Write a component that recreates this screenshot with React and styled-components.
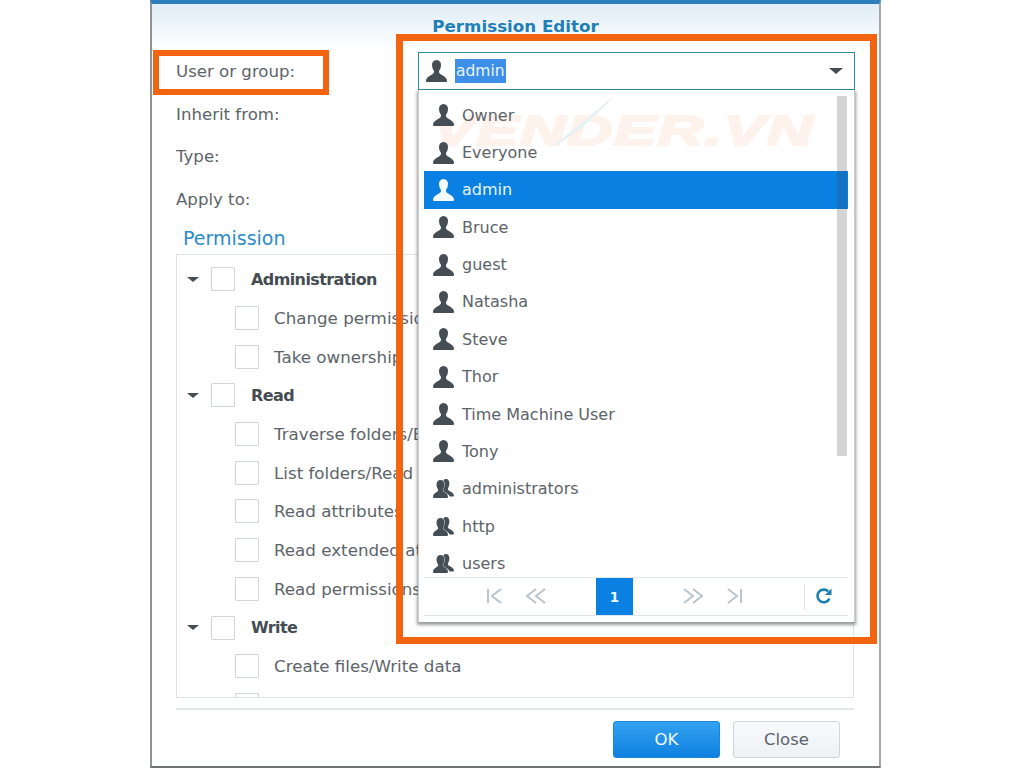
import React from "react";
import styled, { createGlobalStyle } from "styled-components";

const GlobalStyle = createGlobalStyle`
  html, body {
    margin: 0;
    padding: 0;
    background: #fff;
    font-family: "DejaVu Sans", sans-serif;
  }
  * {
    box-sizing: border-box;
  }
`;

const Page = styled.div`
  width: 1024px;
  height: 768px;
  overflow: hidden;
  padding-left: 150px;
`;

const Dialog = styled.div`
  position: relative;
  width: 731px;
  height: 768px;
  border-left: 2px solid #8f9396;
  border-right: 2px solid #a4a8ab;
  border-bottom: 2px solid #6f7376;
  border-top: 4px solid #2b7fbc;
  background: linear-gradient(#dfecf6 0, #fff 46px);
  display: flex;
  flex-direction: column;
  padding: 0 25px 0 24px;
`;

const Title = styled.div`
  height: 44px;
  line-height: 44px;
  padding-left: 1px;
  text-align: center;
  font-size: 16.7px;
  font-weight: bold;
  color: #1f7fb8;
`;

const FormRows = styled.div`
  padding-top: 3px;
`;

const FormRow = styled.div`
  height: 42.7px;
  line-height: 42px;
  font-size: 16.6px;
  color: #5c646a;
`;

const SectionTitle = styled.div`
  height: 26px;
  line-height: 26px;
  margin-top: 3px;
  padding-left: 7px;
  font-size: 19px;
  color: #2a8cc4;
`;

const TreeBox = styled.div`
  height: 444px;
  margin-top: 3px;
  padding-top: 5px;
  border: 1px solid #dfe4e8;
  overflow: hidden;
`;

const TreeRow = styled.div`
  height: 38.72px;
  display: flex;
  align-items: center;
  gap: ${(p) => (p.$parent ? "16px" : "15px")};
  padding-left: ${(p) => (p.$parent ? "10px" : "58px")};
  font-size: ${(p) => (p.$parent ? "16px" : "16.7px")};
  letter-spacing: ${(p) => (p.$parent ? "-0.6px" : "0")};
  font-weight: ${(p) => (p.$parent ? "bold" : "normal")};
  color: ${(p) => (p.$parent ? "#454c52" : "#5c646a")};
  white-space: nowrap;
`;

const Caret = styled.span`
  width: 0;
  height: 0;
  flex: none;
  border-left: ${(p) => p.$size}px solid transparent;
  border-right: ${(p) => p.$size}px solid transparent;
  border-top: ${(p) => p.$size - 1}px solid #454c52;
`;

const TreeCaret = styled(Caret)`
  margin-right: -4px;
`;

const Checkbox = styled.span`
  width: 24px;
  height: 24px;
  flex: none;
  border: 1px solid #cfd5da;
  border-radius: 1px;
  background: #fff;
`;

const Footer = styled.div`
  margin-top: 10px;
  border-top: 2px solid #e3e7ea;
  padding: 11px 14px 0 0;
  display: flex;
  justify-content: flex-end;
  gap: 13px;
`;

const Button = styled.button`
  width: 107px;
  height: 37px;
  padding: 1px 0 0;
  font-family: inherit;
  font-size: 16.5px;
  border-radius: 3px;
  border: 1px solid ${(p) => (p.$primary ? "#1a86dd" : "#ced6dc")};
  background: ${(p) =>
    p.$primary
      ? "linear-gradient(#33a2f2, #0f80e0)"
      : "linear-gradient(#f8fafb, #eef2f5)"};
  color: ${(p) => (p.$primary ? "#f2f9ff" : "#5c646a")};
`;

/* everything below sits on top of the dialog */
const Combo = styled.div`
  position: absolute;
  left: 266px;
  top: 48px;
  width: 437px;
  z-index: 2;
`;

const ComboField = styled.div`
  height: 38px;
  display: flex;
  align-items: center;
  gap: 8px;
  padding: 0 11px 0 7px;
  background: #fff;
  border: 1px solid #2a8fa6;
  font-size: 15.5px;
`;

const Selected = styled.span`
  background: #3d8fe8;
  color: #eaf4ff;
  line-height: 24px;
  padding: 0 1px;
`;

const ComboArrow = styled(Caret)`
  margin-left: auto;
`;

const Dropdown = styled.div`
  position: relative;
  height: 532px;
  background: #fff;
  border-left: 1px solid #c9cdd0;
  border-right: 1px solid #c9cdd0;
  box-shadow: 0 2px 3px 1px rgba(70, 75, 80, 0.55);
  padding: 0 6px 0 5px;
  display: flex;
  flex-direction: column;
`;

const Watermark = styled.div`
  position: absolute;
  left: 14px;
  top: 11px;
  font-family: "Liberation Sans", sans-serif;
  font-size: 42px;
  line-height: 60px;
  font-weight: bold;
  font-style: italic;
  letter-spacing: 1px;
  white-space: nowrap;
  color: #fdf2ec;
  -webkit-text-stroke: 2px #fdf2ec;
  transform: scaleX(1.5);
  transform-origin: left center;
`;

const Swoosh = styled.svg`
  position: absolute;
  left: 125px;
  top: 2px;
`;

const Options = styled.div`
  position: relative;
  height: 487px;
  padding-top: 6.5px;
  overflow: hidden;
`;

const Option = styled.div`
  height: 37.36px;
  display: flex;
  align-items: center;
  gap: 8px;
  padding-left: 9px;
  font-size: 16px;
  color: ${(p) => (p.$active ? "#e8f4ff" : "#5c646a")};
  background: ${(p) => (p.$active ? "#0a80e2" : "transparent")};
`;

const ScrollThumb = styled.div`
  position: absolute;
  right: 1px;
  top: 6px;
  width: 10px;
  height: 360px;
  background: rgba(60, 60, 60, 0.22);
`;

const Pager = styled.div`
  height: 39px;
  display: flex;
  align-items: center;
  padding-left: 52px;
  border-top: 1px solid #e6ebee;
  border-bottom: 1px solid #dbe4e9;
`;

const NavGroup = styled.div`
  display: flex;
  gap: 3px;
  margin-top: -2px;
`;

const NavButton = styled.span`
  width: 38px;
  height: 22px;
  display: flex;
  align-items: center;
  justify-content: center;
`;

const PageNumber = styled.span`
  width: 37px;
  height: 37px;
  margin: 0 41px;
  display: flex;
  align-items: center;
  justify-content: center;
  background: #0a80e2;
  color: #eef7ff;
  font-size: 13.5px;
  font-weight: bold;
`;

const PagerDivider = styled.span`
  width: 1px;
  height: 26px;
  margin-left: 51px;
  background: #dfe4e7;
`;

const RefreshButton = styled(NavButton)`
  margin-top: -2px;
`;

const Highlight = styled.div`
  position: absolute;
  left: ${(p) => p.$left}px;
  top: ${(p) => p.$top}px;
  width: ${(p) => p.$width}px;
  height: ${(p) => p.$height}px;
  border: ${(p) => p.$border}px solid #f26410;
  z-index: 3;
  pointer-events: none;
`;

const UserIcon = ({ color = "#454e55" }) => (
  <svg width="21" height="22" viewBox="0 0 21 22" style={{ flex: "none" }}>
    <path
      fill={color}
      d="M10.500 0C7.500 0 6 2.200 6 5c0 2.500 1 4.500 2 6 .3 1.500-.5 2.500-2 3.500C3.500 16 1 17 0 20v1q0 1 1 1h19q1 0 1-1v-1c-1-3-3.500-4-6-5.500-1.500-1-2.300-2-2-3.500 1-1.500 2-3.500 2-6 0-2.800-1.500-5-4.500-5z"
    />
  </svg>
);

const GroupIcon = () => (
  <svg width="21" height="19" viewBox="0 0 21 19" style={{ flex: "none" }}>
    <path
      fill="#454e55"
      d="M13 0c-1 0-2 .4-2.700 1.200 1 1.200 1.500 2.700 1.500 4.300 0 2-.7 3.800-1.700 5.200 0 .9.600 1.500 1.700 2.200 2 1.200 3.900 2.400 4.900 4.600H20q1 0 1-1c-.5-2.600-2.800-3.500-4.800-4.700-1-.7-1.500-1.300-1.300-2.400.9-1.300 1.500-3 1.500-4.800C16.400 1.800 15.200 0 13 0z"
    />
    <path
      fill="#454e55"
      d="M7.500 1C5 1 3.500 3 3.500 5.500c0 2 .7 3.700 1.600 5 .2 1.100-.3 1.800-1.400 2.500C2.200 14 .3 14.900 0 17.500q0 1.500 1 1.500h13q1 0 1-1.500c-.3-2.600-2.200-3.500-3.700-4.500-1.100-.7-1.600-1.400-1.400-2.500.9-1.300 1.600-3 1.600-5C11.500 3 10 1 7.500 1z"
    />
  </svg>
);

const PagerIcon = ({ d }) => (
  <svg width="22" height="18" viewBox="0 0 22 18">
    <path d={d} fill="none" stroke="#b9c5cc" strokeWidth="2" />
  </svg>
);

const RefreshIcon = () => (
  <svg width="18" height="18" viewBox="0 0 18 18">
    <path
      d="M14.500 11.500A6.300 6.300 0 1 1 13.200 4.400"
      fill="none"
      stroke="#1b7fa8"
      strokeWidth="2.600"
    />
    <path d="M16.500 1.500v6.500H10z" fill="#1b7fa8" />
  </svg>
);

const treeRows = [
  { label: "Administration", parent: true },
  { label: "Change permissions" },
  { label: "Take ownership" },
  { label: "Read", parent: true },
  { label: "Traverse folders/Execute files" },
  { label: "List folders/Read data" },
  { label: "Read attributes" },
  { label: "Read extended attributes" },
  { label: "Read permissions" },
  { label: "Write", parent: true },
  { label: "Create files/Write data" },
  { label: "Create folders/Append data" },
];

const options = [
  { name: "Owner" },
  { name: "Everyone" },
  { name: "admin", active: true },
  { name: "Bruce" },
  { name: "guest" },
  { name: "Natasha" },
  { name: "Steve" },
  { name: "Thor" },
  { name: "Time Machine User" },
  { name: "Tony" },
  { name: "administrators", group: true },
  { name: "http", group: true },
  { name: "users", group: true },
];

const App = () => {
  return (
    <Page>
      <GlobalStyle />
      <Dialog>
        <Title>Permission Editor</Title>
        <FormRows>
          <FormRow>User or group:</FormRow>
          <FormRow>Inherit from:</FormRow>
          <FormRow>Type:</FormRow>
          <FormRow>Apply to:</FormRow>
        </FormRows>
        <SectionTitle>Permission</SectionTitle>
        <TreeBox>
          {treeRows.map((row) => (
            <TreeRow key={row.label} $parent={row.parent}>
              {row.parent && <TreeCaret $size={6} />}
              <Checkbox />
              {row.label}
            </TreeRow>
          ))}
        </TreeBox>
        <Footer>
          <Button $primary>OK</Button>
          <Button>Close</Button>
        </Footer>

        <Combo>
          <ComboField>
            <UserIcon />
            <Selected>admin</Selected>
            <ComboArrow $size={7} />
          </ComboField>
          <Dropdown>
            <Watermark>VENDER.VN</Watermark>
            <Swoosh width="90" height="60" viewBox="0 0 90 60">
              <path d="M72 2C50 20 28 40 6 56c22-10 44-30 66-54z" fill="#e6f1f2" />
            </Swoosh>
            <Options>
              {options.map((option) => (
                <Option key={option.name} $active={option.active}>
                  {option.group ? (
                    <GroupIcon />
                  ) : (
                    <UserIcon color={option.active ? "#f4faff" : "#454e55"} />
                  )}
                  {option.name}
                </Option>
              ))}
              <ScrollThumb />
            </Options>
            <Pager>
              <NavGroup>
                <NavButton>
                  <PagerIcon d="M4 2v14M17 2l-9 7 9 7" />
                </NavButton>
                <NavButton>
                  <PagerIcon d="M11 2l-9 7 9 7M20 2l-9 7 9 7" />
                </NavButton>
              </NavGroup>
              <PageNumber>1</PageNumber>
              <NavGroup>
                <NavButton>
                  <PagerIcon d="M2 2l9 7-9 7M11 2l9 7-9 7" />
                </NavButton>
                <NavButton>
                  <PagerIcon d="M5 2l9 7-9 7M18 2v14" />
                </NavButton>
              </NavGroup>
              <PagerDivider />
              <RefreshButton>
                <RefreshIcon />
              </RefreshButton>
            </Pager>
          </Dropdown>
        </Combo>

        <Highlight $left={1} $top={46} $width={176} $height={45} $border={6} />
        <Highlight $left={244} $top={30} $width={481} $height={610} $border={7} />
      </Dialog>
    </Page>
  );
};

export default App;
